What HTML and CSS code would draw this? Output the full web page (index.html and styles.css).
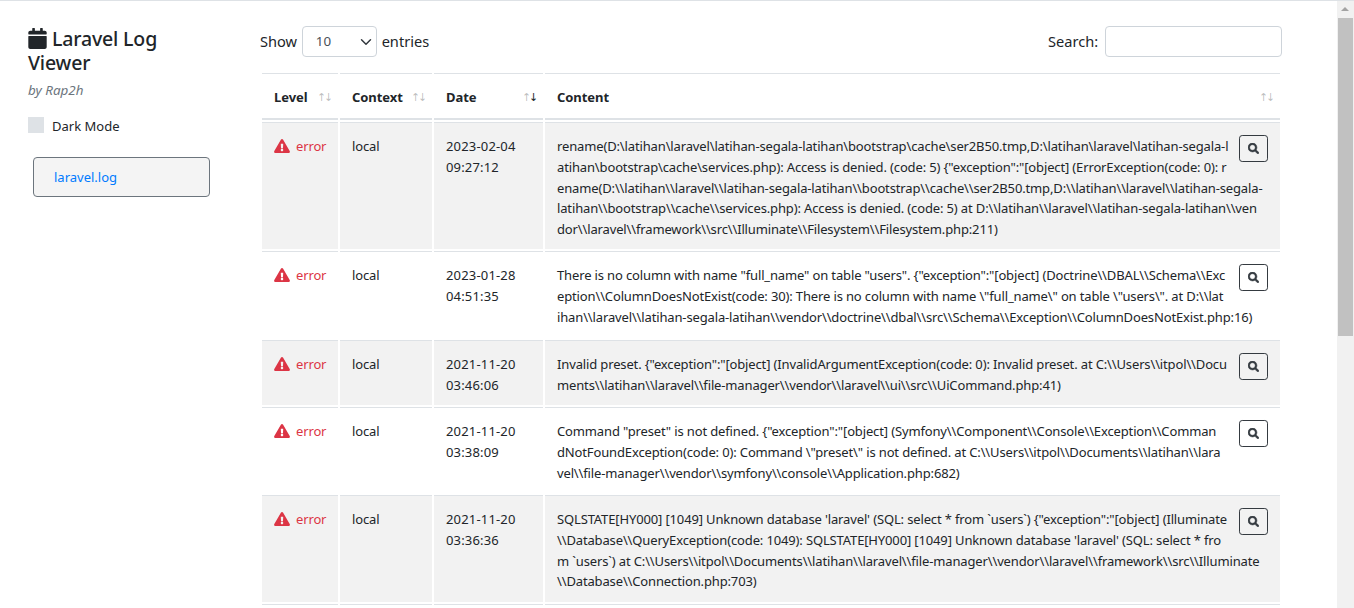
FILE: index.html
```html
<!DOCTYPE html>
<html lang="en">
<head>
<meta charset="utf-8">
<title>Laravel Log Viewer</title>
<link rel="stylesheet" href="styles.css">
</head>
<body>
<svg class="defs" width="0" height="0" aria-hidden="true">
  <symbol id="i-cal" viewBox="0 0 448 512"><path d="M12 192h424c6.6 0 12 5.4 12 12v260c0 26.5-21.5 48-48 48H48c-26.5 0-48-21.5-48-48V204c0-6.6 5.4-12 12-12zm436-44v-36c0-26.5-21.5-48-48-48h-48V12c0-6.6-5.4-12-12-12h-40c-6.6 0-12 5.4-12 12v52H160V12c0-6.6-5.4-12-12-12h-40c-6.6 0-12 5.4-12 12v52H48C21.5 64 0 85.5 0 112v36c0 6.6 5.4 12 12 12h424c6.6 0 12-5.4 12-12z"/></symbol>
  <symbol id="i-warn" viewBox="0 0 576 512"><path d="M569.517 440.013C587.975 472.007 564.806 512 527.94 512H48.054c-36.937 0-59.999-40.055-41.577-71.987L246.423 23.985c18.467-32.009 64.72-31.951 83.154 0l239.94 416.028zM288 354c-25.405 0-46 20.595-46 46s20.595 46 46 46 46-20.595 46-46-20.595-46-46-46zm-43.673-165.346l7.418 136c.347 6.364 5.609 11.346 11.982 11.346h48.546c6.373 0 11.635-4.982 11.982-11.346l7.418-136c.375-6.874-5.098-12.654-11.982-12.654h-63.383c-6.884 0-12.356 5.78-11.981 12.654z"/></symbol>
  <symbol id="i-search" viewBox="0 0 512 512"><path d="M505 442.7L405.3 343c-4.5-4.5-10.6-7-17-7H372c27.6-35.3 44-79.7 44-128C416 93.1 322.9 0 208 0S0 93.1 0 208s93.1 208 208 208c48.3 0 92.7-16.4 128-44v16.3c0 6.4 2.5 12.5 7 17l99.7 99.7c9.4 9.4 24.6 9.4 33.9 0l28.3-28.3c9.4-9.4 9.4-24.6.1-34zM208 336c-70.7 0-128-57.2-128-128 0-70.7 57.2-128 128-128 70.7 0 128 57.2 128 128 0 70.7-57.2 128-128 128z"/></symbol>
</svg>
<div class="app">
  <div class="page">
    <aside class="sidebar">
      <h1 class="title"><svg class="cal"><use href="#i-cal"/></svg> Laravel Log Viewer</h1>
      <p class="byline">by Rap2h</p>
      <label class="dark"><input type="checkbox" class="dark-box"><span class="dark-text">Dark Mode</span></label>
      <div class="files"><a class="file" href="#">laravel.log</a></div>
    </aside>
    <main class="content">
      <div class="controls">
        <label class="ctl">Show <select class="sel"><option>10</option><option>25</option></select> entries</label>
        <label class="ctl ctl-search">Search: <input class="search" type="search"></label>
      </div>
      <table class="logs">
        <colgroup><col class="c1"><col class="c2"><col class="c3"><col></colgroup>
        <thead>
          <tr>
            <th><div class="th"><span>Level</span><span class="sort">↑↓</span></div></th>
            <th><div class="th"><span>Context</span><span class="sort">↑↓</span></div></th>
            <th><div class="th"><span>Date</span><span class="sort">↑<b class="on">↓</b></span></div></th>
            <th><div class="th"><span>Content</span><span class="sort">↑↓</span></div></th>
          </tr>
        </thead>
        <tbody>
          <tr class="odd r5">
            <td><span class="lvl"><svg class="warn"><use href="#i-warn"/></svg>error</span></td>
            <td>local</td>
            <td class="date">2023-02-04<br>09:27:12</td>
            <td><button class="zoom" type="button"><svg><use href="#i-search"/></svg></button><div class="msg">rename(D:\latihan\laravel\latihan-segala-latihan\bootstrap\cache\ser2B50.tmp,D:\latihan\laravel\latihan-segala-l<br>atihan\bootstrap\cache\services.php): Access is denied. (code: 5) {"exception":"[object] (ErrorException(code: 0): r<br>ename(D:\\latihan\\laravel\\latihan-segala-latihan\\bootstrap\\cache\\ser2B50.tmp,D:\\latihan\\laravel\\latihan-segala-<br>latihan\\bootstrap\\cache\\services.php): Access is denied. (code: 5) at D:\\latihan\\laravel\\latihan-segala-latihan\\ven<br>dor\\laravel\\framework\\src\\Illuminate\\Filesystem\\Filesystem.php:211)</div></td>
          </tr>
          <tr class="r3a">
            <td><span class="lvl"><svg class="warn"><use href="#i-warn"/></svg>error</span></td>
            <td>local</td>
            <td class="date">2023-01-28<br>04:51:35</td>
            <td><button class="zoom" type="button"><svg><use href="#i-search"/></svg></button><div class="msg">There is no column with name "full_name" on table "users". {"exception":"[object] (Doctrine\\DBAL\\Schema\\Exc<br>eption\\ColumnDoesNotExist(code: 30): There is no column with name \"full_name\" on table \"users\". at D:\\lat<br>ihan\\laravel\\latihan-segala-latihan\\vendor\\doctrine\\dbal\\src\\Schema\\Exception\\ColumnDoesNotExist.php:16)</div></td>
          </tr>
          <tr class="odd r2">
            <td><span class="lvl"><svg class="warn"><use href="#i-warn"/></svg>error</span></td>
            <td>local</td>
            <td class="date">2021-11-20<br>03:46:06</td>
            <td><button class="zoom" type="button"><svg><use href="#i-search"/></svg></button><div class="msg">Invalid preset. {"exception":"[object] (InvalidArgumentException(code: 0): Invalid preset. at C:\\Users\\itpol\\Docu<br>ments\\latihan\\laravel\\file-manager\\vendor\\laravel\\ui\\src\\UiCommand.php:41)</div></td>
          </tr>
          <tr class="r3b">
            <td><span class="lvl"><svg class="warn"><use href="#i-warn"/></svg>error</span></td>
            <td>local</td>
            <td class="date">2021-11-20<br>03:38:09</td>
            <td><button class="zoom" type="button"><svg><use href="#i-search"/></svg></button><div class="msg">Command "preset" is not defined. {"exception":"[object] (Symfony\\Component\\Console\\Exception\\Comman<br>dNotFoundException(code: 0): Command \"preset\" is not defined. at C:\\Users\\itpol\\Documents\\latihan\\lara<br>vel\\file-manager\\vendor\\symfony\\console\\Application.php:682)</div></td>
          </tr>
          <tr class="odd r4">
            <td><span class="lvl"><svg class="warn"><use href="#i-warn"/></svg>error</span></td>
            <td>local</td>
            <td class="date">2021-11-20<br>03:36:36</td>
            <td><button class="zoom" type="button"><svg><use href="#i-search"/></svg></button><div class="msg">SQLSTATE[HY000] [1049] Unknown database 'laravel' (SQL: select * from `users`) {"exception":"[object] (Illuminate<br>\\Database\\QueryException(code: 1049): SQLSTATE[HY000] [1049] Unknown database 'laravel' (SQL: select * fro<br>m `users`) at C:\\Users\\itpol\\Documents\\latihan\\laravel\\file-manager\\vendor\\laravel\\framework\\src\\Illuminate<br>\\Database\\Connection.php:703)</div></td>
          </tr>
          <tr class="r2"><td></td><td></td><td></td><td></td></tr>
        </tbody>
      </table>
    </main>
  </div>
  <div class="scrollbar" aria-hidden="true">
    <div class="sb-up"></div>
    <div class="sb-thumb"></div>
  </div>
</div>
</body>
</html>
```
FILE: styles.css
```css
* { box-sizing: border-box; }
html, body { margin: 0; height: 100%; overflow: hidden; }
body {
  font-family: "Noto Sans", "Open Sans", sans-serif;
  font-size: 14px;
  line-height: 1.5;
  color: #212529;
  background: #fff;
}
.defs { position: absolute; }
.app { display: flex; height: 608px; border-top: 1px solid #dee2e6; }
.page { flex: 1; display: flex; min-width: 0; overflow: hidden; }
.sidebar { width: 245px; flex: none; padding: 26px 0 0 28px; }
.title { margin: 0; font-size: 19.5px; letter-spacing: -.15px; line-height: 24px; font-weight: 500; width: 170px; }
.cal { width: 19px; height: 21px; fill: #212529; vertical-align: -3px; }
.byline { margin: 5px 0 0; font-style: italic; color: #6c757d; font-size: 13.4px; line-height: 21px; }
.dark { display: flex; align-items: center; gap: 8px; height: 20px; margin-top: 14px; font-size: 13px; line-height: 18px; }
.dark-box { appearance: none; width: 16px; height: 16px; margin: 0; background: #dee2e6; border: 0; }
.dark-text { padding-top: 1px; }
.files { margin: 22px 0 0 5px; width: 177px; }
.file { display: block; height: 40px; padding: 0 20px; line-height: 38px; background: #f4f4f4; border: 1px solid #6c757d; border-radius: 4px; color: #007bff; text-decoration: none; font-size: 13px; }
.content { width: 1022px; flex: none; margin-left: 15px; padding-top: 25px; }
.controls { display: flex; justify-content: space-between; align-items: center; height: 31px; }
.ctl { font-size: 14.6px; display: flex; align-items: center; gap: 1px; white-space: pre; }
.ctl-search { gap: 3px; }
.sel {
  appearance: none; width: 75px; height: 31px; padding: 0 13px; margin: 0;
  border: 1px solid #ced4da; border-radius: 4px; color: #495057; font: inherit; font-size: 13.4px;
  background: #fff url("data:image/svg+xml,%3csvg xmlns='http://www.w3.org/2000/svg' viewBox='0 0 16 16'%3e%3cpath fill='none' stroke='%23343a40' stroke-linecap='round' stroke-linejoin='round' stroke-width='2' d='M2 5l6 6 6-6'/%3e%3c/svg%3e") no-repeat right 4px center / 12px 12px;
}
.search { width: 177px; height: 31px; margin: 0; border: 1px solid #ced4da; border-radius: 4px; background: #fff; }
.logs { width: 1022px; table-layout: fixed; border-collapse: separate; border-spacing: 2px; margin-top: 14px; font-size: 13px; letter-spacing: -.14px; line-height: 20.8px; }
.c1 { width: 76px; }
.c2 { width: 92px; }
.c3 { width: 109px; }
.logs th { padding: 2px 7px 0 12px; height: 47px; border-top: 1px solid #dee2e6; border-bottom: 2px solid #dee2e6; text-align: left; font-weight: 700; font-size: 13px; letter-spacing: -.05px; }
.th { display: flex; justify-content: space-between; align-items: center; }
.sort { font-weight: 400; font-size: 11px; letter-spacing: -2.2px; padding-top: 2px; font-family: "DejaVu Sans", sans-serif; color: rgba(33, 37, 41, .3); }
.on { font-weight: 400; color: #212529; }
.logs td { padding: 13px 12px 0; vertical-align: top; border-top: 1px solid #dee2e6; }
.logs td.date { letter-spacing: .17px; }
.logs tr.odd td { background: #f2f2f2; }
.r5 td { height: 127px; }
.r3a td { height: 87px; }
.r2 td { height: 65px; }
.r3b td { height: 86px; }
.r4 td { height: 107px; }
.lvl { color: #dc3545; display: flex; align-items: center; gap: 6px; }
.warn { width: 16px; height: 14px; fill: #dc3545; flex: none; }
.zoom { float: right; width: 29px; height: 27px; padding: 0; margin: -1px 0 0 8px; display: flex; align-items: center; justify-content: center; background: transparent; border: 1px solid #343a40; border-radius: 3.2px; }
.zoom svg { width: 11px; height: 11px; fill: #343a40; stroke: #343a40; stroke-width: 24px; overflow: visible; }
.msg { white-space: nowrap; }
.scrollbar { width: 17px; flex: none; background: #f1f1f1; display: flex; flex-direction: column; align-items: center; }
.sb-up { height: 17px; width: 17px; position: relative; }
.sb-up::after { content: ""; position: absolute; left: 4px; top: 6px; border: 4px solid transparent; border-top: 0; border-bottom: 4px solid #a3a3a3; }
.sb-thumb { width: 15px; height: 318px; background: #c1c1c1; }
```
